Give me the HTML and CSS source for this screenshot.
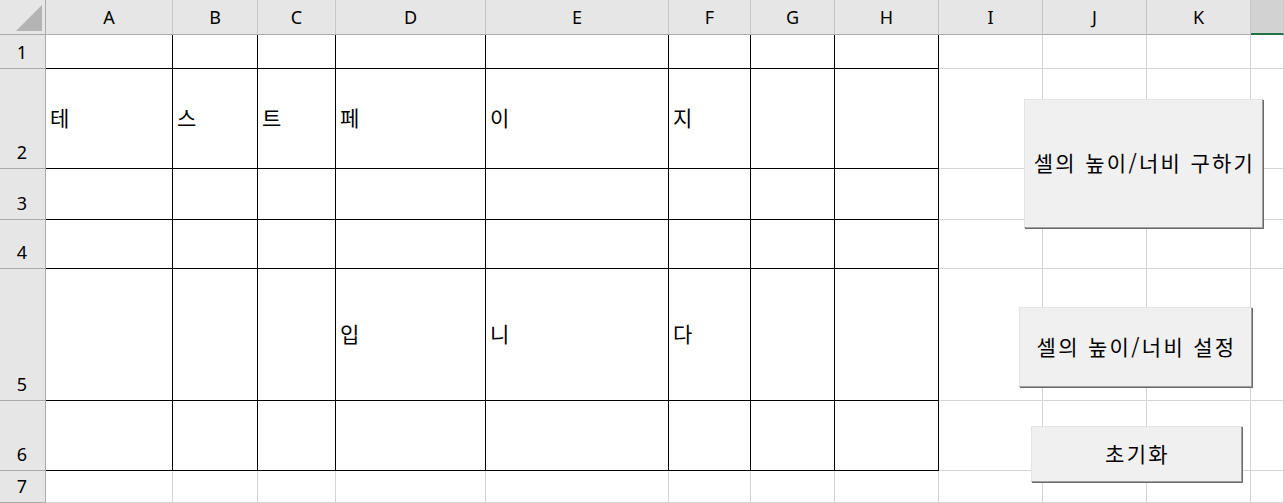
FILE: index.html
```html
<!DOCTYPE html>
<html lang="ko">
<head>
<meta charset="utf-8">
<title>Sheet</title>
<link rel="stylesheet" href="styles.css">
</head>
<body>
<div class="sheet">
  <div class="grid">
    <div class="corner"><span class="tri"></span></div>
    <div class="hd">A</div><div class="hd">B</div><div class="hd">C</div><div class="hd">D</div>
    <div class="hd">E</div><div class="hd">F</div><div class="hd">G</div><div class="hd">H</div>
    <div class="hd">I</div><div class="hd">J</div><div class="hd">K</div><div class="hd sel"></div>

    <div class="rh">1</div>
    <div class="c b"></div><div class="c b"></div><div class="c b"></div><div class="c b"></div>
    <div class="c b"></div><div class="c b"></div><div class="c b"></div><div class="c b"></div>
    <div class="c"></div><div class="c"></div><div class="c"></div><div class="c"></div>

    <div class="rh">2</div>
    <div class="c b">테</div><div class="c b">스</div><div class="c b">트</div><div class="c b">페</div>
    <div class="c b">이</div><div class="c b">지</div><div class="c b"></div><div class="c b"></div>
    <div class="c"></div><div class="c"></div><div class="c"></div><div class="c"></div>

    <div class="rh">3</div>
    <div class="c b"></div><div class="c b"></div><div class="c b"></div><div class="c b"></div>
    <div class="c b"></div><div class="c b"></div><div class="c b"></div><div class="c b"></div>
    <div class="c"></div><div class="c"></div><div class="c"></div><div class="c"></div>

    <div class="rh">4</div>
    <div class="c b"></div><div class="c b"></div><div class="c b"></div><div class="c b"></div>
    <div class="c b"></div><div class="c b"></div><div class="c b"></div><div class="c b"></div>
    <div class="c"></div><div class="c"></div><div class="c"></div><div class="c"></div>

    <div class="rh">5</div>
    <div class="c b"></div><div class="c b"></div><div class="c b"></div><div class="c b">입</div>
    <div class="c b">니</div><div class="c b">다</div><div class="c b"></div><div class="c b"></div>
    <div class="c"></div><div class="c"></div><div class="c"></div><div class="c"></div>

    <div class="rh">6</div>
    <div class="c b"></div><div class="c b"></div><div class="c b"></div><div class="c b"></div>
    <div class="c b"></div><div class="c b"></div><div class="c b"></div><div class="c b"></div>
    <div class="c"></div><div class="c"></div><div class="c"></div><div class="c"></div>

    <div class="rh">7</div>
    <div class="c"></div><div class="c"></div><div class="c"></div><div class="c"></div>
    <div class="c"></div><div class="c"></div><div class="c"></div><div class="c"></div>
    <div class="c"></div><div class="c"></div><div class="c"></div><div class="c"></div>
  </div>

  <button class="btn btn-get">셀의 높이/너비 구하기</button>
  <button class="btn btn-set">셀의 높이/너비 설정</button>
  <button class="btn btn-reset">초기화</button>
</div>
</body>
</html>
```

FILE: styles.css
```css
html, body {
  margin: 0;
  padding: 0;
  background: #ffffff;
}

.sheet {
  position: relative;
  width: 1284px;
  height: 503px;
  overflow: hidden;
}

.grid {
  display: grid;
  grid-template-columns: 46px 127px 85px 78px 150px 183px 82px 84px 104px 104px 104px 104px 1fr;
  grid-template-rows: 35px 34px 100px 51px 49px 132px 70px 1fr;
  width: 1284px;
  height: 503px;
}

.grid > div {
  box-sizing: border-box;
  border-right: 1px solid #d4d4d4;
  border-bottom: 1px solid #d4d4d4;
}

.corner {
  background: #e6e6e6;
  position: relative;
  border-right-color: #ababab !important;
  border-bottom-color: #ababab !important;
}

.tri {
  position: absolute;
  left: 16px;
  top: 5px;
  width: 0;
  height: 0;
  border-left: 26px solid transparent;
  border-bottom: 26px solid #b4b4b4;
}

.hd {
  background: #e6e6e6;
  border-right-color: #c6c6c6 !important;
  border-bottom-color: #ababab !important;
  display: flex;
  align-items: center;
  justify-content: center;
  font-family: "Noto Sans", "Open Sans", sans-serif;
  font-size: 18px;
  color: #000;
  padding-bottom: 1px;
}

.hd.sel {
  background: #d2d2d2;
  border-bottom: 2px solid #217346 !important;
}

.rh {
  background: #e6e6e6;
  border-right-color: #ababab !important;
  border-bottom-color: #ababab !important;
  display: flex;
  align-items: flex-end;
  justify-content: center;
  font-family: "Noto Sans", "Open Sans", sans-serif;
  font-size: 18px;
  line-height: 1;
  padding-bottom: 7px;
  padding-right: 1px;
  color: #000;
}

.c {
  display: flex;
  align-items: center;
  padding-left: 4px;
  padding-bottom: 3px;
  font-family: "Noto Sans CJK KR", "Noto Sans", sans-serif;
  font-size: 21px;
  color: #000;
}

.c.b {
  border-right-color: #000 !important;
  border-bottom-color: #000 !important;
}

.btn {
  position: absolute;
  box-sizing: border-box;
  margin: 0;
  padding: 0 0 3px 2px;
  background: #f0f0f0;
  border-top: 1px solid #e3e3e3;
  border-left: 1px solid #e3e3e3;
  border-right: 1px solid #a0a0a0;
  border-bottom: 1px solid #a0a0a0;
  box-shadow: 1px 1px 0 #696969;
  font-family: "Noto Sans CJK KR", "Noto Sans", sans-serif;
  font-size: 21px;
  letter-spacing: 2.3px;
  color: #000;
  display: flex;
  align-items: center;
  justify-content: center;
}

.btn-get {
  left: 1024px;
  top: 99px;
  width: 239px;
  height: 129px;
}

.btn-set {
  left: 1019px;
  top: 307px;
  width: 233px;
  height: 80px;
}

.btn-reset {
  left: 1031px;
  top: 426px;
  width: 211px;
  height: 56px;
}
```
